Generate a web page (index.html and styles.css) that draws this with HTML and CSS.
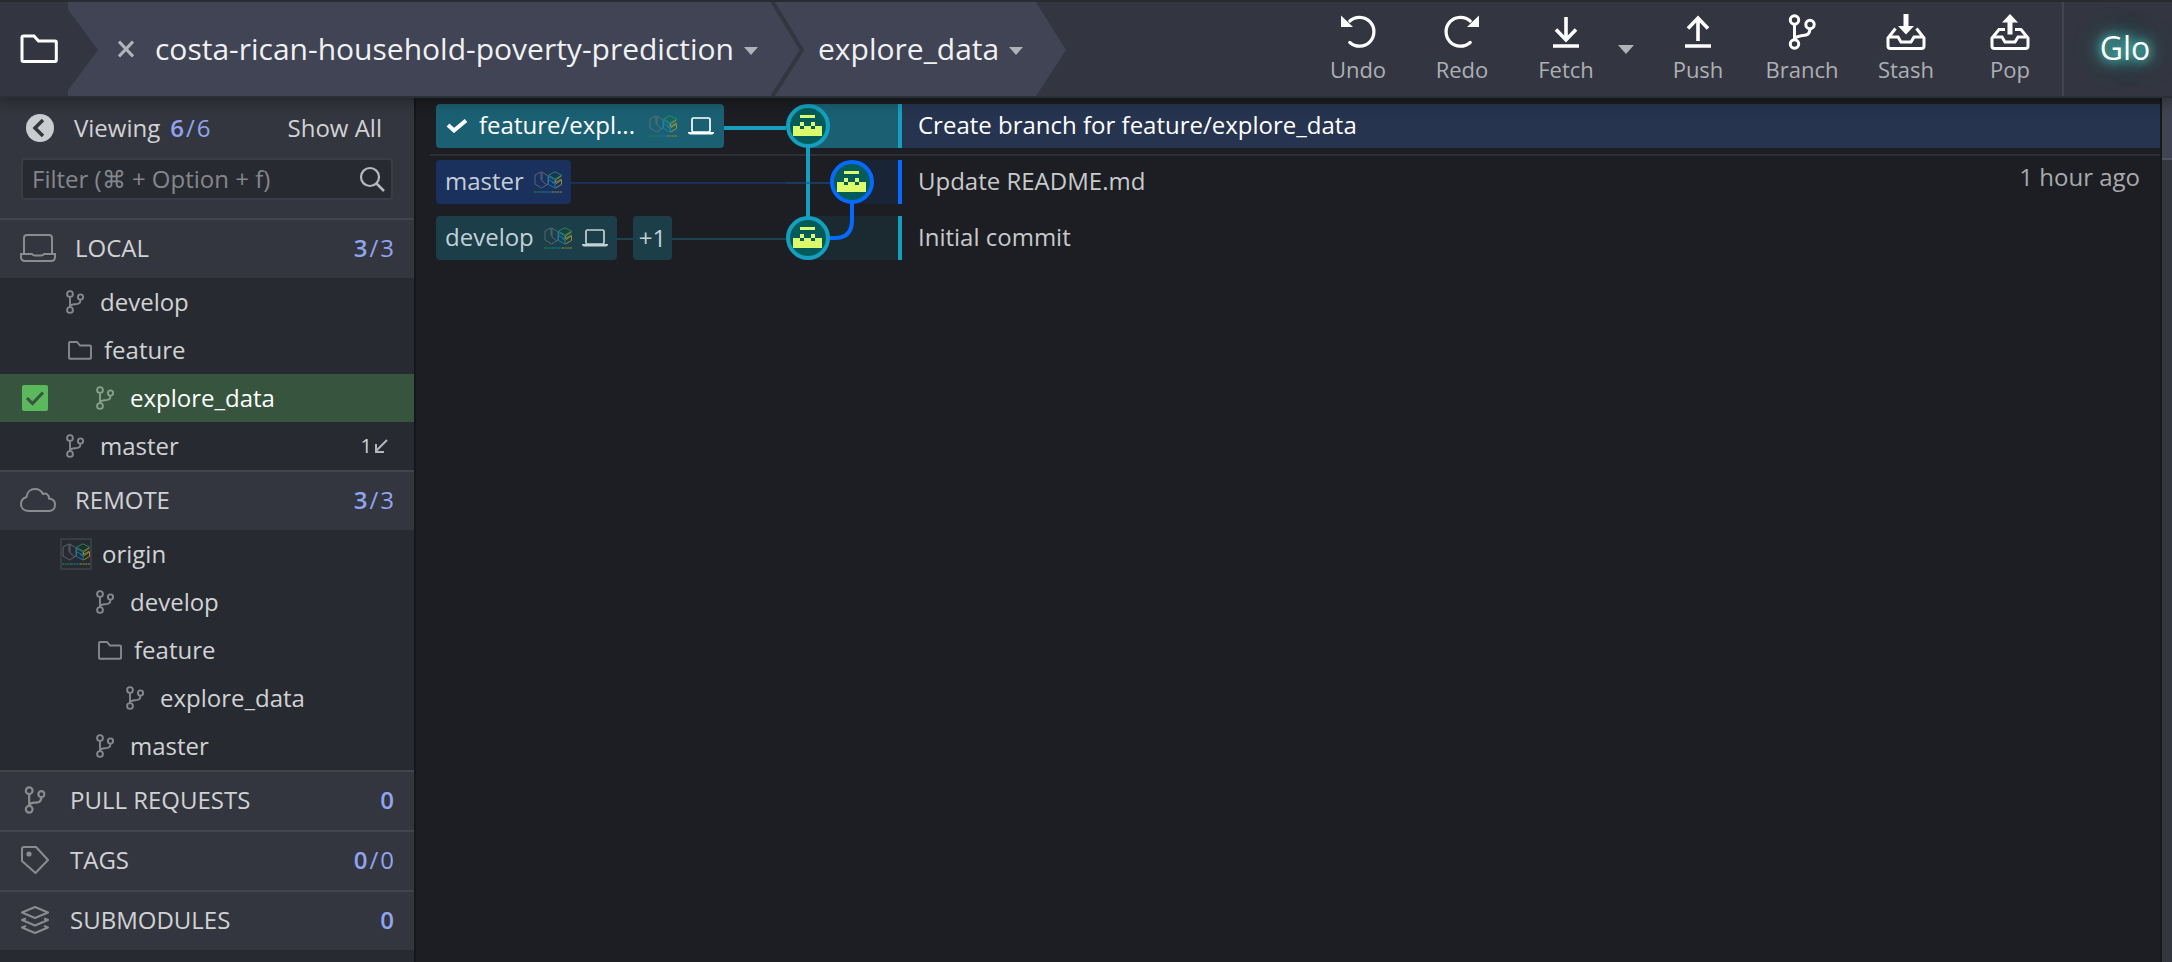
FILE: index.html
```html
<!DOCTYPE html>
<html lang="en">
<head>
<meta charset="utf-8">
<title>costa-rican-household-poverty-prediction</title>
<link rel="stylesheet" href="styles.css">
</head>
<body>
<svg class="sprite" aria-hidden="true">
  <symbol id="i-branch" viewBox="0 0 18 24"><g fill="none" stroke="currentColor" stroke-width="1.900"><circle cx="4" cy="4" r="2.900"/><circle cx="14.500" cy="7" r="2.600"/><circle cx="4" cy="20" r="2.900"/><path d="M4 7v10M14.500 9.700c0 5-4 4.300-7.500 4.800-1.700.3-3 1-3 2.500"/></g></symbol>
  <symbol id="i-folder" viewBox="0 0 28 24"><path d="M3 20V5q0-1 1-1h7l3 3.500h10q1 0 1 1V20q0 .8-1 .8H4q-1 0-1-.8z" fill="none" stroke="currentColor" stroke-width="1.900"/></symbol>
  <symbol id="i-laptop" viewBox="0 0 26 18"><rect x="4" y="1" width="18" height="14" rx="1.500" fill="none" stroke="currentColor" stroke-width="1.700"/><path d="M0 15h26v.8q-.5 1.700-2 1.700H2q-1.500 0-2-1.700z" fill="currentColor"/></symbol>
  <symbol id="i-logo" viewBox="0 0 28 22"><g opacity=".8"><g fill="none" stroke-width="1"><path d="M7 .8 1 4v9l6.500 4 6.500-4V5L8 1v9l5 4M7 .8v8" stroke="#66737e"/><path d="m21 .8 6.500 3.400L21 8l-6.500-3.800z" stroke="#20a04c"/><path d="M14.500 5.500 21 9l-.2 3-6.300-3.500zM14.500 9v4.500L21 17v-4l-3-1.500" stroke="#168fc0"/><path d="m27.500 5-6 4v2.500l6-3.500M21.500 13l6-4v4.500l-6 3.500" stroke="#b0a12c"/></g><g stroke-width="1.300" stroke-dasharray="2 .6"><path d="M0 21h9" stroke="#20804c"/><path d="M9 21h9" stroke="#14749c"/><path d="M18 21h10" stroke="#8b8130"/></g></g></symbol>
  <symbol id="i-avatar" viewBox="-22 -22 44 44"><circle r="20" fill="#045c5a"/><path d="M-8-11H7v3H-8zM-8-4h4V0h-4zM3-4h4V0H3zM-15 0h7v3h4V0h7v3h4V0h7v10h-29z" fill="#dbfa6c" shape-rendering="crispEdges"/><circle r="20" fill="none" stroke="currentColor" stroke-width="4"/></symbol>
</svg>

<header class="topbar">
  <button class="repo-open" aria-label="Open repository"><svg width="38" height="30" viewBox="0 0 38 30"><path d="M2 26V3.500Q2 2 3.500 2H14l4.500 5H35q1.300 0 1.300 1.300V26q0 1.500-1.300 1.500H3.500Q2 27.500 2 26z" fill="none" stroke="#fff" stroke-width="3"/></svg></button>
  <nav class="crumbs">
    <button class="close" aria-label="Close"><svg width="16" height="18" viewBox="0 0 16 18"><path d="m1 1.500 14 15m0-15-14 15" stroke="#b2b4bc" stroke-width="3"/></svg></button>
    <button class="crumb">costa-rican-household-poverty-prediction<i class="caret"></i></button>
    <svg class="divider" viewBox="0 0 34 94" preserveAspectRatio="none"><path d="M1-1 31 48 1 95" fill="none" stroke="#333640" stroke-width="4"/></svg>
    <button class="crumb">explore_data<i class="caret"></i></button>
  </nav>
  <div class="tools">
    <button class="tool"><svg viewBox="0 0 40 36"><path d="M9.500 6.500A15.500 15.500 0 1 1 9.500 29.500" transform="translate(3 1) scale(.93)" fill="none" stroke="#fff" stroke-width="3.500" stroke-linecap="round"/><path d="M3 1.500V13h12z" fill="#fff"/></svg>Undo</button>
    <button class="tool"><svg viewBox="0 0 40 36"><g transform="matrix(-1 0 0 1 40 0)"><path d="M9.500 6.500A15.500 15.500 0 1 1 9.500 29.500" transform="translate(3 1) scale(.93)" fill="none" stroke="#fff" stroke-width="3.500" stroke-linecap="round"/><path d="M3 1.500V13h12z" fill="#fff"/></g></svg>Redo</button>
    <button class="tool"><svg viewBox="0 0 40 36"><path d="M20 3v21M10 15.500 20 26l10-10.500M7 32h26" fill="none" stroke="#fff" stroke-width="3.600"/></svg>Fetch</button>
    <button class="tool-menu" aria-label="Fetch options"><i class="caret wide"></i></button>
    <button class="tool"><svg viewBox="0 0 40 36"><path d="M20 27V4M10 14.500 20 4l10 10.500M7 32h26" fill="none" stroke="#fff" stroke-width="3.600"/></svg>Push</button>
    <button class="tool"><svg viewBox="0 0 40 36"><g fill="none" stroke="#fff" stroke-width="3"><circle cx="12.500" cy="6" r="4.200"/><circle cx="28" cy="10.500" r="4.200"/><circle cx="12.500" cy="30" r="4.200"/><path d="M12.500 10v16M28 14.500c-.3 8-5 6.500-10 7.500-3 .5-5 1-5.500 4"/></g></svg>Branch</button>
    <button class="tool"><svg viewBox="0 0 40 36"><path d="M9.500 14.500 2 24v8q0 2.500 2.500 2.500h31q2.500 0 2.500-2.500v-8l-7.500-9.500M2 23h10l3 5h10l3-5h10" fill="none" stroke="#fff" stroke-width="3"/><path d="M17.500 0h5v12H28l-8 8.500L12 12h5.500z" fill="#fff"/></svg>Stash</button>
    <button class="tool"><svg viewBox="0 0 40 36"><path d="M15 15.500H9L2 24v8q0 2.500 2.500 2.500h31q2.500 0 2.500-2.500v-8l-7-8.500h-6M2 23h10l3 5h10l3-5h10" fill="none" stroke="#fff" stroke-width="3"/><path d="M17.500 20.500h5v-12H28L20 0l-8 8.500h5.500z" fill="#fff"/></svg>Pop</button>
  </div>
  <button class="glo">Glo</button>
</header>

<div class="workspace">
  <aside class="sidebar">
    <div class="panel-top">
      <div class="viewing">
        <button class="collapse" aria-label="Collapse"><svg width="28" height="28" viewBox="0 0 28 28"><circle cx="14" cy="14" r="14" fill="#caccd0"/><path d="m17 6-8 8 8 8" fill="none" stroke="#34363f" stroke-width="3.500"/></svg></button>
        <span>Viewing</span><span class="count"><b>6</b><i>/</i>6</span>
        <button class="show-all">Show All</button>
      </div>
      <label class="filter">
        <input type="text" aria-label="Filter" placeholder="Filter (⌘ + Option + f)">
        <svg width="26" height="26" viewBox="0 0 26 26"><circle cx="11" cy="11" r="9" fill="none" stroke="#b7b9be" stroke-width="2.200"/><path d="m17.500 17.500 7.500 7.500" stroke="#b7b9be" stroke-width="2.500"/></svg>
      </label>
    </div>

    <button class="section"><svg class="sec-wide" viewBox="0 0 36 28"><g fill="none" stroke="currentColor" stroke-width="2"><path d="M4 20V4q0-3 3-3h22q3 0 3 3v16"/><path d="M1 20h11q1 1.500 3 1.500h6q2 0 3-1.500h11v3q0 4-4 4H5q-4 0-4-4z"/></g></svg><span>LOCAL</span><span class="count"><b>3</b><i>/</i>3</span></button>
    <ul class="tree">
      <li class="lv1"><svg class="br"><use href="#i-branch"/></svg>develop</li>
      <li class="lv1"><svg class="fo"><use href="#i-folder"/></svg>feature</li>
      <li class="lv2 active"><svg class="mark" viewBox="0 0 26 26"><rect width="26" height="26" rx="2" fill="#5cb85c"/><path d="m5 13 5.500 5.500L21 7.500" fill="none" stroke="#36543e" stroke-width="3"/></svg><svg class="br"><use href="#i-branch"/></svg>explore_data</li>
      <li class="lv1"><svg class="br"><use href="#i-branch"/></svg>master<span class="behind">1<svg width="14" height="14" viewBox="0 0 14 14"><path d="M13 1 2 12M2 5v8h8" fill="none" stroke="currentColor" stroke-width="2"/></svg></span></li>
    </ul>

    <button class="section"><svg class="sec-wide" viewBox="0 0 36 28"><path d="M9 25C4 25 1 22 1 18c0-3.500 2-6 5.500-7C7 6 10.500 3 15 3c4 0 6.500 2 8 5 3-1.500 6 .5 6 4.500 4 .5 6 3 6 6 0 4-2.500 6.500-6 6.500z" fill="none" stroke="currentColor" stroke-width="2"/></svg><span>REMOTE</span><span class="count"><b>3</b><i>/</i>3</span></button>
    <ul class="tree">
      <li class="lv0"><span class="avatar-box"><svg width="28" height="22"><use href="#i-logo"/></svg></span>origin</li>
      <li class="lv2"><svg class="br"><use href="#i-branch"/></svg>develop</li>
      <li class="lv2"><svg class="fo"><use href="#i-folder"/></svg>feature</li>
      <li class="lv3"><svg class="br"><use href="#i-branch"/></svg>explore_data</li>
      <li class="lv2"><svg class="br"><use href="#i-branch"/></svg>master</li>
    </ul>

    <button class="section"><svg class="sec" viewBox="0 0 18 24"><use href="#i-branch"/></svg><span>PULL REQUESTS</span><span class="count"><b>0</b></span></button>
    <button class="section"><svg class="sec" viewBox="0 0 28 28"><path d="M1 15V3q0-2 2-2h12l12 13-12.500 13z" fill="none" stroke="currentColor" stroke-width="2" stroke-linejoin="round"/><circle cx="8" cy="8" r="2.600" fill="currentColor"/></svg><span>TAGS</span><span class="count"><b>0</b><i>/</i>0</span></button>
    <button class="section"><svg class="sec" viewBox="0 0 28 28"><g fill="none" stroke="currentColor" stroke-width="2" stroke-linejoin="round"><path d="m14 1 13 5.500L14 12 1 6.500z"/><path d="M5 12.300 1 14l13 5.500L27 14l-4-1.700"/><path d="M5 19.800 1 21.500 14 27l13-5.500-4-1.700"/></g></svg><span>SUBMODULES</span><span class="count"><b>0</b></span></button>
  </aside>

  <main class="graph">
    <div class="commit current">
      <div class="refs">
        <button class="ref teal"><svg width="22" height="14" viewBox="0 0 22 14"><path d="m2 6 6 5.500L20 1.500" fill="none" stroke="#fff" stroke-width="4"/></svg><span class="long">feature/expl...</span><svg width="28" height="22"><use href="#i-logo"/></svg><svg width="26" height="18"><use href="#i-laptop"/></svg></button>
        <i class="link"></i>
      </div>
      <div class="lane"></div>
      <div class="message"><span>Create branch for feature/explore_data</span></div>
    </div>
    <div class="commit blue-row">
      <div class="refs">
        <button class="ref blue"><span>master</span><svg width="28" height="22"><use href="#i-logo"/></svg></button>
        <i class="link"></i>
      </div>
      <div class="lane"></div>
      <div class="message"><span>Update README.md</span><time>1 hour ago</time></div>
    </div>
    <div class="commit teal-row">
      <div class="refs">
        <button class="ref dim"><span>develop</span><svg width="28" height="22"><use href="#i-logo"/></svg><svg width="26" height="18"><use href="#i-laptop"/></svg></button>
        <i class="link short"></i>
        <button class="ref dim more">+1</button>
        <i class="link"></i>
      </div>
      <div class="lane"></div>
      <div class="message"><span>Initial commit</span></div>
    </div>
    <svg class="nodes" width="88" height="156" viewBox="0 0 88 156">
      <path d="M22 22v112" stroke="#159fbf" stroke-width="4"/>
      <path d="M0 79h44" stroke="#1b4f86" stroke-opacity=".6" stroke-width="2"/>
      <path d="M66 78v38q0 18-17 18h-5" fill="none" stroke="#066aff" stroke-width="4"/>
      <use href="#i-avatar" width="44" height="44" color="#159fbf"/>
      <use href="#i-avatar" x="44" y="56" width="44" height="44" color="#066aff"/>
      <use href="#i-avatar" y="112" width="44" height="44" color="#159fbf"/>
    </svg>
  </main>
  <aside class="details"><div class="details-head"></div></aside>
</div>
</body>
</html>
```
FILE: styles.css
```css
* { box-sizing: border-box; }
body {
  margin: 0;
  height: 100vh;
  overflow: hidden;
  display: flex;
  flex-direction: column;
  background: #1c1e23;
  color: #d0d2d4;
  font: 24px/32px "Open Sans", "Noto Sans", sans-serif;
}
button {
  border: 0;
  padding: 0;
  background: none;
  color: inherit;
  font: inherit;
}
svg { display: block; flex: none; }
.sprite { position: absolute; width: 0; height: 0; }

/* Top bar */
.topbar {
  position: relative;
  z-index: 2;
  display: flex;
  height: 98px;
  flex: none;
  border-top: 2px solid #282b32;
  border-bottom: 2px solid #2a2e36;
  background: #333640;
  box-shadow: 0 0 14px 2px rgba(0, 0, 0, .4);
}
.repo-open { width: 68px; padding-left: 20px; }
.crumbs {
  display: flex;
  align-items: center;
  width: 998px;
  padding-left: 50px;
  background: #404454;
  clip-path: polygon(0 0, calc(100% - 30px) 0, 100% 51%, calc(100% - 30px) 100%, 0 100%, 0 94%, 30px 51%, 0 8%);
}
.crumb {
  display: flex;
  align-items: center;
  font-size: 30px;
  line-height: 40px;
  color: #f0f1f3;
}
.close { margin-right: 21px; }
.caret {
  margin: 4px 0 0 10px;
  border: 7px solid transparent;
  border-top: 8px solid #b0b2ba;
  border-bottom: 0;
}
.divider { width: 34px; height: 94px; margin: 0 13px; }
.tools { display: flex; margin-left: auto; }
.tool {
  display: flex;
  flex-direction: column;
  align-items: center;
  gap: 5px;
  width: 104px;
  padding-top: 12px;
  font-size: 22px;
  line-height: 28px;
  color: #adafb5;
}
.tool svg { width: 40px; height: 36px; }
.tool-menu { display: flex; align-items: center; width: 28px; }
.caret.wide { margin: 0; border-width: 9px 8px 0; }
.glo {
  width: 110px;
  border-left: 2px solid #42454f;
  padding: 0 0 2px 14px;
  font-size: 32px;
  color: #fff;
  text-shadow: 0 0 8px #4fd0c5, 0 0 16px #46beb5, 0 0 20px #3aa39d, 0 0 28px #256a6c;
}

/* Sidebar */
.workspace { display: flex; flex: 1; min-height: 0; }
.sidebar {
  width: 416px;
  flex: none;
  border-right: 2px solid #15171b;
  background: #282a31;
}
.panel-top {
  height: 120px;
  padding: 14px 21px 0;
  background: #34363f;
}
.viewing { display: flex; align-items: center; height: 32px; }
.collapse { margin: 0 20px 0 5px; }
.count { display: flex; gap: 2px; margin-left: auto; color: #91a4f0; }
.viewing .count { margin-left: 10px; }
.count b { font-weight: 600; }
.count i { font-style: normal; }
.show-all { margin: 0 11px 0 auto; }
.filter {
  display: flex;
  align-items: center;
  height: 42px;
  margin-top: 14px;
  padding: 0 6px 0 9px;
  border: 2px solid #3a3d47;
  border-radius: 4px;
  background: #282a31;
}
.filter input {
  flex: 1;
  min-width: 0;
  border: 0;
  padding: 0;
  background: none;
  color: inherit;
  font: inherit;
}
.filter input::placeholder { color: #84868c; opacity: 1; }
.section {
  display: flex;
  align-items: center;
  width: 100%;
  height: 60px;
  padding: 0 20px 2px;
  border-top: 2px solid #42444e;
  background: #34363f;
}
.section svg { color: #8a8c92; }
.sec-wide { width: 36px; height: 28px; margin-right: 19px; }
.sec { width: 30px; height: 28px; margin-right: 20px; }
.tree { margin: 0; padding: 0; list-style: none; }
.tree li {
  position: relative;
  display: flex;
  align-items: center;
  gap: 10px;
  height: 48px;
  padding-right: 26px;
}
.lv0 { padding-left: 60px; }
.lv1 { padding-left: 66px; }
.lv2 { padding-left: 96px; }
.lv3 { padding-left: 126px; }
.tree svg { color: #86888d; }
.br { width: 18px; height: 24px; margin-right: 6px; }
.fo { width: 28px; height: 24px; }
.tree .active { background: #36543e; color: #fff; }
.tree .active .br { color: #86a08c; }
.mark { position: absolute; left: 22px; top: 11px; width: 26px; height: 26px; }
.behind { display: flex; align-items: center; gap: 2px; margin-left: auto; font-size: 20px; }
.tree .behind svg { color: #b4b6b9; }
.avatar-box {
  display: grid;
  place-items: center;
  width: 32px;
  height: 32px;
  border: 2px solid #3a3c45;
}

/* Commit graph */
.graph {
  position: relative;
  flex: 1;
  min-width: 0;
  padding: 6px 0 0 14px;
}
.commit {
  display: grid;
  grid-template-columns: 356px 116px 1fr;
  grid-template-rows: 44px;
  margin-bottom: 12px;
  color: #c8cacc;
}
.commit.current {
  margin-bottom: 4px;
  padding-bottom: 6px;
  border-bottom: 2px solid #2d2f34;
  color: #fff;
}
.refs { display: flex; padding-left: 6px; }
.ref {
  display: flex;
  align-items: center;
  gap: 10px;
  padding: 0 9px;
  border-radius: 4px;
}
.ref span, .message span { padding-bottom: 3px; }
.ref.teal { gap: 11px; padding: 0 10px; background: #1a6072; }
.ref.blue { background: #19315c; color: #c6ccd8; }
.ref.dim { background: #1b3e49; color: #c2d1d5; }
.ref .long { margin-right: 3px; }
.ref.more { padding: 0 6px; }
.link {
  flex: 1;
  align-self: flex-end;
  height: 50%;
  border-top: 2px solid #1c4450;
}
.link.short { flex: 0 0 16px; }
.current .link { border-top: 4px solid #159fbf; }
.blue-row .link { border-color: #182f58; }
.lane { margin-left: 22px; border-right: 4px solid #159fbf; background: #1b2a31; }
.current .lane { background: #1a6072; }
.blue-row .lane { margin-left: 66px; border-color: #066aff; background: #192437; }
.message {
  display: flex;
  align-items: center;
  justify-content: space-between;
  padding: 0 20px 0 16px;
}
.message time { padding-bottom: 10px; color: #a8aaad; }
.current .message { background: #26344f; }
.nodes { position: absolute; left: 370px; top: 6px; }

/* Right panel edge */
.details {
  width: 12px;
  flex: none;
  border-left: 2px solid #15171b;
  background: #34363f;
}
.details-head { height: 62px; border-bottom: 2px solid #50535f; background: #404350; }
```
